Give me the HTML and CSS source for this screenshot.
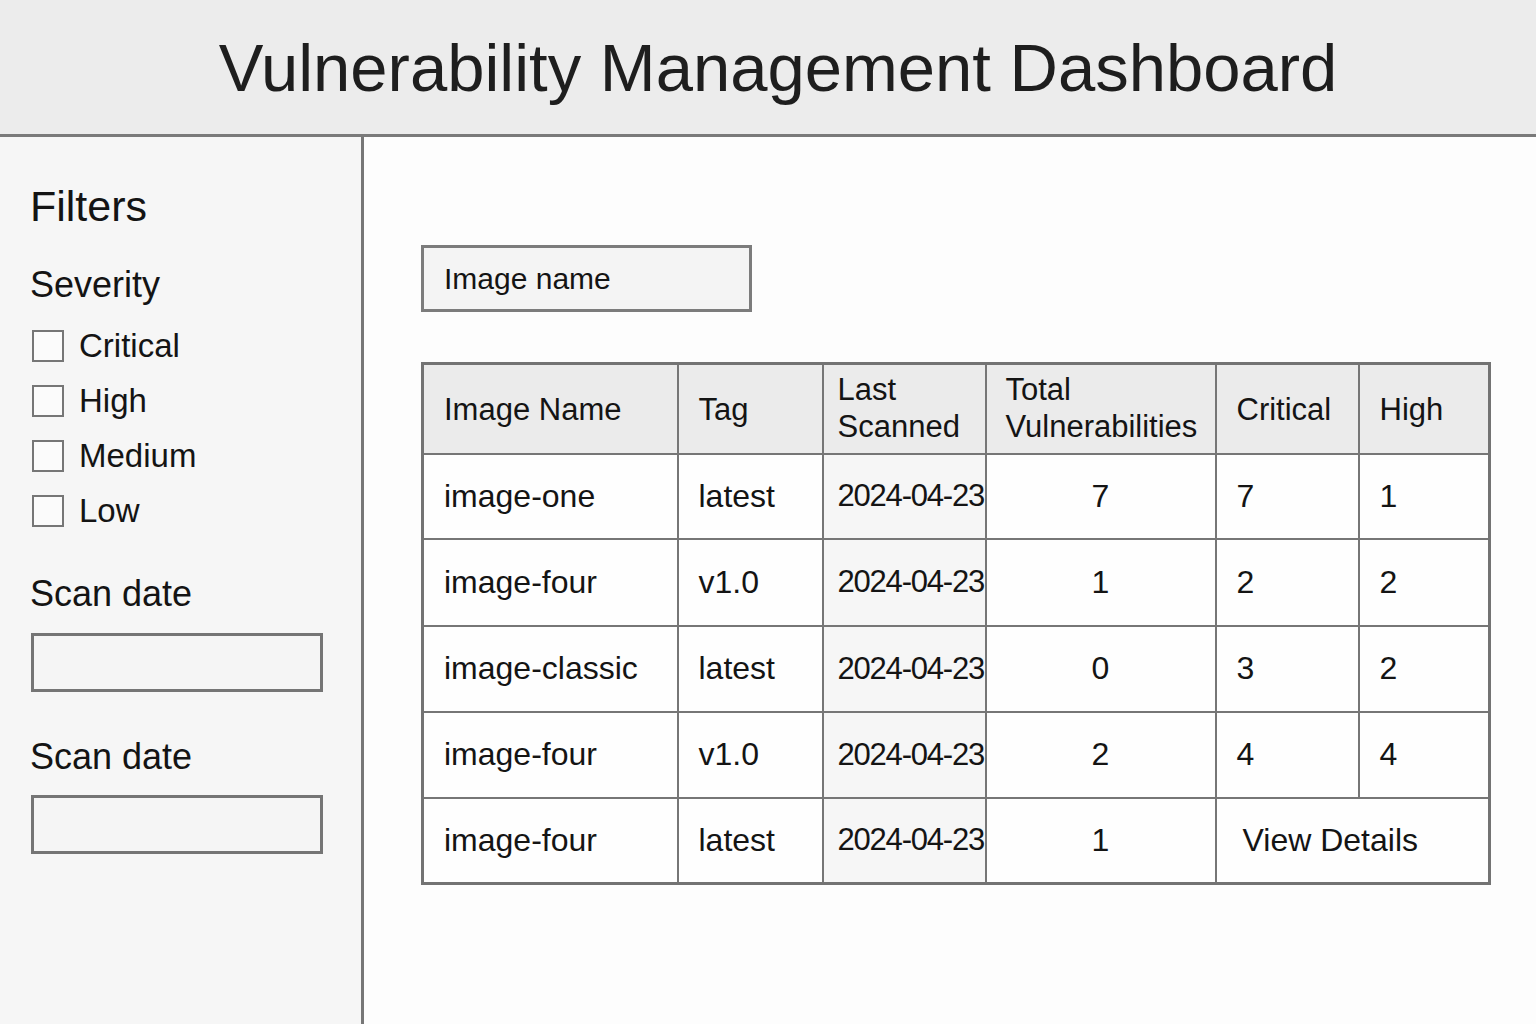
FILE: index.html
```html
<!DOCTYPE html>
<html lang="en">
<head>
<meta charset="utf-8">
<title>Vulnerability Management Dashboard</title>
<link rel="stylesheet" href="styles.css">
</head>
<body>
<header class="topbar">
  <h1 class="title">Vulnerability Management Dashboard</h1>
</header>
<div class="layout">
  <aside class="sidebar">
    <h2 class="filters-title">Filters</h2>
    <h3 class="group-title">Severity</h3>
    <ul class="checks">
      <li class="check"><span class="box"></span><span class="check-label">Critical</span></li>
      <li class="check"><span class="box"></span><span class="check-label">High</span></li>
      <li class="check"><span class="box"></span><span class="check-label">Medium</span></li>
      <li class="check"><span class="box"></span><span class="check-label">Low</span></li>
    </ul>
    <h3 class="group-title scan-title">Scan date</h3>
    <div class="date-input"></div>
    <h3 class="group-title scan-title second">Scan date</h3>
    <div class="date-input"></div>
  </aside>
  <main class="content">
    <div class="search">Image name</div>
    <table class="grid">
      <colgroup>
        <col class="c-name"><col class="c-tag"><col class="c-date"><col class="c-total"><col class="c-crit"><col class="c-high">
      </colgroup>
      <thead>
        <tr>
          <th>Image Name</th>
          <th>Tag</th>
          <th class="two-line">Last<br>Scanned</th>
          <th class="two-line">Total<br>Vulnerabilities</th>
          <th>Critical</th>
          <th>High</th>
        </tr>
      </thead>
      <tbody>
        <tr><td>image-one</td><td>latest</td><td class="date">2024-04-23</td><td class="num">7</td><td>7</td><td>1</td></tr>
        <tr><td>image-four</td><td>v1.0</td><td class="date">2024-04-23</td><td class="num">1</td><td>2</td><td>2</td></tr>
        <tr><td>image-classic</td><td>latest</td><td class="date">2024-04-23</td><td class="num">0</td><td>3</td><td>2</td></tr>
        <tr><td>image-four</td><td>v1.0</td><td class="date">2024-04-23</td><td class="num">2</td><td>4</td><td>4</td></tr>
        <tr><td>image-four</td><td>latest</td><td class="date">2024-04-23</td><td class="num">1</td><td colspan="2" class="details">View Details</td></tr>
      </tbody>
    </table>
  </main>
</div>
</body>
</html>
```

FILE: styles.css
```css
* { box-sizing: border-box; }

html, body {
  margin: 0;
  padding: 0;
  height: 100%;
}

body {
  font-family: "Liberation Sans", Arial, sans-serif;
  color: #141414;
  background: #fdfdfd;
  display: flex;
  flex-direction: column;
  height: 1024px;
  overflow: hidden;
}

.topbar {
  height: 137px;
  flex: none;
  background: #ececec;
  border-bottom: 3px solid #7a7a7a;
  display: flex;
  align-items: center;
  justify-content: center;
}

.title {
  margin: 0;
  font-weight: normal;
  font-size: 67px;
  line-height: 80px;
  color: #1e1e1e;
  padding-top: 2px;
  padding-left: 20px;
}

.layout {
  flex: 1;
  display: flex;
  min-height: 0;
}

.sidebar {
  width: 364px;
  flex: none;
  background: #f6f6f6;
  border-right: 3px solid #777;
  padding: 44px 0 0 30px;
}

.filters-title {
  margin: 0;
  font-weight: normal;
  font-size: 43px;
  line-height: 50px;
}

.group-title {
  margin: 34px 0 0;
  font-weight: normal;
  font-size: 36px;
  line-height: 40px;
}

.checks {
  list-style: none;
  margin: 21px 0 0;
  padding: 0;
  display: flex;
  flex-direction: column;
  gap: 15px;
}

.check {
  height: 40px;
  display: flex;
  align-items: center;
  gap: 15px;
  font-size: 33px;
}

.box {
  width: 32px;
  height: 32px;
  margin-left: 2px;
  border: 2px solid #767676;
  background: #fbfbfb;
  flex: none;
}

.scan-title {
  margin-top: 43px;
}

.scan-title.second {
  margin-top: 45px;
}

.date-input {
  margin-top: 19px;
  margin-left: 1px;
  width: 292px;
  height: 59px;
  border: 3px solid #757575;
  background: #f5f5f5;
}

.scan-title.second + .date-input {
  margin-top: 18px;
}

.content {
  flex: 1;
  padding: 108px 0 0 57px;
}

.search {
  width: 331px;
  height: 67px;
  border: 3px solid #7c7c7c;
  background: #f4f4f4;
  font-size: 30px;
  line-height: 61px;
  padding-left: 20px;
}

.grid {
  margin-top: 50px;
  border-collapse: collapse;
  table-layout: fixed;
  width: 1067px;
  border: 3px solid #737373;
}

.c-name { width: 255px; }
.c-tag { width: 145px; }
.c-date { width: 163px; }
.c-total { width: 230px; }
.c-crit { width: 143px; }
.c-high { width: 131px; }

.grid th,
.grid td {
  border: 2px solid #767676;
  text-align: left;
  vertical-align: middle;
  padding: 0 0 0 20px;
  white-space: nowrap;
  font-weight: normal;
}

.grid th {
  background: #ebebeb;
  font-size: 31px;
  line-height: 37px;
  height: 90px;
  padding-top: 1px;
}

.grid th.two-line {
  padding-left: 14px;
  padding-top: 0;
  padding-bottom: 2px;
}

.grid th:nth-child(4) {
  padding-left: 19px;
}

.grid td {
  background: #fefefe;
  font-size: 32px;
  height: 86px;
}

.grid tbody tr:first-child td { height: 85px; }
.grid tbody tr:nth-child(2) td { height: 87px; }

.grid td.date {
  background: #f6f6f6;
  padding-left: 14px;
  font-size: 31px;
  letter-spacing: -1.2px;
}

.grid td.num {
  text-align: center;
  padding: 0;
}

.grid td.details {
  padding-left: 26px;
}
```
